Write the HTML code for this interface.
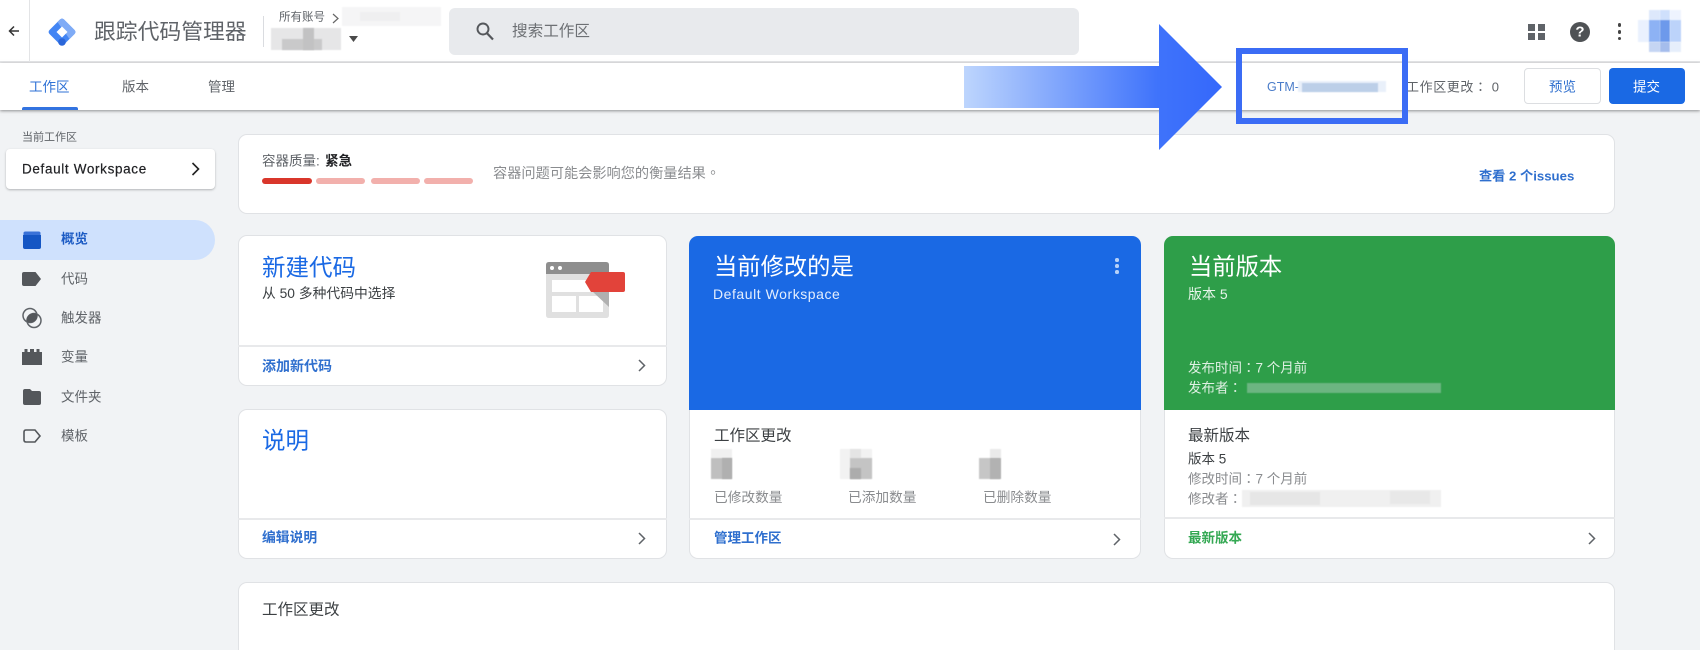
<!DOCTYPE html>
<html lang="zh-CN"><head><meta charset="utf-8"><title>跟踪代码管理器</title>
<style>
*{box-sizing:border-box}
html,body{margin:0;padding:0;width:1700px;height:650px;overflow:hidden;background:#f1f3f5}
#w{position:relative;width:1700px;height:650px;overflow:hidden;background:#f1f3f5;font-family:"Liberation Sans","Noto Sans CJK SC",sans-serif;color:#3c4043;filter:blur(.3px)}
.a{position:absolute}
.t{position:absolute;white-space:nowrap;line-height:1;transform:translateY(-50%);font-size:14px}
.tc{font-family:"Liberation Sans","Noto Sans CJK TC",sans-serif}
.card{position:absolute;background:#fff;border:1px solid #e0e2e5;border-radius:9px;overflow:hidden}
.line{position:absolute;height:2px;background:#e8e9eb}
.blue{color:#2f6fce}
.b{font-weight:700}
.g{color:#8a8c8f}
.px{position:absolute;filter:blur(.6px)}
svg{position:absolute;overflow:visible}
</style></head><body><div id="w">

<!-- header -->
<div class="a" style="left:0;top:0;width:1700px;height:62px;background:#fff"></div>
<div class="a" style="left:0;top:61px;width:1700px;height:2px;background:#e6e7e9"></div>
<div class="a" style="left:0;top:63px;width:1700px;height:47px;background:#fff;box-shadow:0 1px 3px rgba(60,60,60,.55)"></div>
<div class="a" style="left:29px;top:0;width:1px;height:62px;background:#e3e4e6"></div>
<svg style="left:7px;top:24px" width="14" height="14" viewBox="0 0 14 14"><path d="M12 7H2.500M7 2.500 2.500 7 7 11.500" fill="none" stroke="#333" stroke-width="1.500"/></svg>
<svg style="left:47px;top:17px" width="30" height="30" viewBox="0 0 30 30">
<path d="M13 2.500Q15 .8 17 2.500L27.500 13Q29.300 15 27.500 17L17 27.500Q15 29.200 13 27.500L2.500 17Q.7 15 2.500 13Z" fill="#4285f4"/>
<path d="M13 2.500Q15 .8 17 2.500L27.500 13Q29.300 15 27.500 17L22.500 22 10.500 5Z" fill="#7fabf6"/>
<circle cx="15" cy="25" r="3.800" fill="#2a66d9"/>
<path d="M15 9.500 20.500 15 15 20.500 9.500 15Z" fill="#fff"/>
</svg>
<span class="t" style="left:94px;top:32px;font-size:21.800px;color:#5f6368">跟踪代码管理器</span>
<div class="a" style="left:263px;top:16px;width:1px;height:31px;background:#dadce0"></div>
<span class="t" style="left:279px;top:18px;font-size:11.500px;color:#5f6368">所有账号</span>
<svg style="left:332px;top:13px" width="8" height="11" viewBox="0 0 8 11"><path d="M1 1 6 5.500 1 10" fill="none" stroke="#666" stroke-width="1.200"/></svg>
<div class="px" style="left:342px;top:7px;width:99px;height:19px;background:#f5f5f6"></div>
<div class="px" style="left:360px;top:12px;width:40px;height:9px;background:#efeff0"></div>
<div class="px" style="left:271px;top:28px;width:70px;height:22px;background:#e6e6e7"></div>
<div class="px" style="left:282px;top:39px;width:40px;height:11px;background:#c9c9ca"></div>
<div class="px" style="left:303px;top:28px;width:11px;height:22px;background:#c2c2c3"></div>
<svg style="left:349px;top:36px" width="9" height="6" viewBox="0 0 9 6"><path d="M0 0H9L4.500 6Z" fill="#4a4a4a"/></svg>

<div class="a" style="left:449px;top:8px;width:630px;height:47px;background:#e8eaed;border-radius:6px"></div>
<svg style="left:475px;top:21px" width="20" height="20" viewBox="0 0 20 20"><circle cx="8" cy="8" r="5.500" fill="none" stroke="#54575b" stroke-width="1.900"/><path d="M12 12.200 18 18.500" stroke="#54575b" stroke-width="2.200"/></svg>
<span class="t" style="left:512px;top:32px;font-size:15.600px;color:#6d7074">搜索工作区</span>

<!-- top right icons -->
<div class="a" style="left:1528px;top:24px;width:7px;height:7px;background:#5f6368"></div>
<div class="a" style="left:1538px;top:24px;width:7px;height:7px;background:#5f6368"></div>
<div class="a" style="left:1528px;top:33px;width:7px;height:7px;background:#5f6368"></div>
<div class="a" style="left:1538px;top:33px;width:7px;height:7px;background:#5f6368"></div>
<div class="a" style="left:1570px;top:22px;width:20px;height:20px;border-radius:50%;background:#4f5255"></div>
<span class="t b" style="left:1575px;top:32px;font-size:15px;color:#fff;width:10px;text-align:center">?</span>
<div class="a" style="left:1617.500px;top:23px;width:3.500px;height:3.500px;border-radius:50%;background:#444"></div>
<div class="a" style="left:1617.500px;top:30px;width:3.500px;height:3.500px;border-radius:50%;background:#444"></div>
<div class="a" style="left:1617.500px;top:36.500px;width:3.500px;height:3.500px;border-radius:50%;background:#444"></div>
<!-- avatar mosaic -->
<div class="px" style="left:1649px;top:10px;width:11px;height:10px;background:#dde8fb"></div>
<div class="px" style="left:1660px;top:10px;width:10px;height:10px;background:#cfe0fc"></div>
<div class="px" style="left:1670px;top:10px;width:11px;height:10px;background:#eef3fe"></div>
<div class="px" style="left:1638px;top:20px;width:11px;height:22px;background:#eaf1fe"></div>
<div class="px" style="left:1649px;top:20px;width:11px;height:22px;background:#8db2f4"></div>
<div class="px" style="left:1660px;top:20px;width:10px;height:22px;background:#6d99eb"></div>
<div class="px" style="left:1670px;top:20px;width:11px;height:22px;background:#bcd3fa"></div>
<div class="px" style="left:1649px;top:42px;width:11px;height:10px;background:#c5d5f3"></div>
<div class="px" style="left:1660px;top:42px;width:10px;height:10px;background:#a5bdec"></div>
<div class="px" style="left:1670px;top:42px;width:11px;height:10px;background:#e6eefb"></div>

<!-- tabs -->
<span class="t blue" style="left:29px;top:87px;font-size:13.500px;color:#2f72d6">工作区</span>
<div class="a" style="left:22px;top:107px;width:56px;height:3px;background:#3273e0;border-radius:2px 2px 0 0"></div>
<span class="t" style="left:122px;top:87px;font-size:13.500px;color:#5f6368">版本</span>
<span class="t" style="left:208px;top:87px;font-size:13.500px;color:#5f6368">管理</span>

<span class="t" style="left:1267px;top:87px;font-size:12.500px;color:#4a7cc9">GTM-</span>
<div class="px" style="left:1298px;top:81px;width:88px;height:11px;background:#e9f0fa"></div>
<div class="px" style="left:1302px;top:83px;width:76px;height:9px;background:#bccfe8"></div>
<span class="t tc" lang="zh-TW" style="left:1406px;top:87px;font-size:13px;letter-spacing:.6px;color:#5f6368">工作区更改： 0</span>
<div class="a" style="left:1524px;top:68px;width:77px;height:36px;background:#fff;border:1px solid #dcdee1;border-radius:4px"></div>
<span class="t" style="left:1549px;top:87px;font-size:13.500px;color:#2f6fce">预览</span>
<div class="a" style="left:1609px;top:68px;width:76px;height:36px;background:#1a69e4;border-radius:4px"></div>
<span class="t" style="left:1633px;top:87px;font-size:13.500px;color:#fff">提交</span>

<!-- sidebar -->
<span class="t" style="left:22px;top:138px;font-size:11px;color:#5f6368">当前工作区</span>
<div class="a" style="left:6px;top:149px;width:209px;height:40px;background:#fff;border-radius:4px;box-shadow:0 1px 2px rgba(60,64,67,.35)"></div>
<span class="t" style="left:22px;top:169px;font-size:13.500px;letter-spacing:.65px;color:#202124;-webkit-text-stroke:.2px #202124">Default Workspace</span>
<svg style="left:191px;top:162px" width="9" height="14" viewBox="0 0 9 14"><path d="M1.500 1 7.500 7 1.500 13" fill="none" stroke="#222" stroke-width="1.600"/></svg>

<div class="a" style="left:0;top:220px;width:215px;height:40px;background:#cfe1fd;border-radius:0 20px 20px 0"></div>
<svg style="left:22px;top:230px" width="20" height="20" viewBox="0 0 20 20"><path d="M2 2.500Q2 1 4 1H17Q19 1 19 2.500V5H2Z" fill="#3a72d8" transform="translate(-.5 .5)"/><path d="M1 5H19V17Q19 19 17 19H3Q1 19 1 17Z" fill="#1556c4"/></svg>
<svg style="left:22px;top:272px" width="20" height="14" viewBox="0 0 20 14"><path d="M2 0H13.500L19 7 13.500 14H2Q0 14 0 12V2Q0 0 2 0Z" fill="#54575b"/></svg>
<svg style="left:22px;top:307px" width="20" height="22" viewBox="0 0 20 22"><circle cx="8" cy="8.500" r="7" fill="none" stroke="#5f6368" stroke-width="1.500"/><circle cx="12" cy="13.500" r="7" fill="none" stroke="#5f6368" stroke-width="1.500"/><path d="M4.500 12.800A7 7 0 0 1 14.800 7.200 7 7 0 0 1 15.500 9 7 7 0 0 1 5.500 14.800Z" fill="#54575b"/></svg>
<svg style="left:22px;top:349px" width="20" height="16" viewBox="0 0 20 16"><path d="M0 16V3H2.500V0H5.500V3H8V0H12V3H14.500V0H17.500V3H20V16Z" fill="#54575b"/></svg>
<svg style="left:23px;top:389px" width="18" height="16" viewBox="0 0 18 16"><path d="M2 0H7L9 2H16Q18 2 18 4V14Q18 16 16 16H2Q0 16 0 14V2Q0 0 2 0Z" fill="#54575b"/></svg>
<svg style="left:23px;top:429px" width="18" height="14" viewBox="0 0 18 14"><path d="M3 1H12L17 7 12 13H3Q1 13 1 11V3Q1 1 3 1Z" fill="none" stroke="#54575b" stroke-width="1.600"/></svg>
<span class="t b" style="left:61px;top:239px;font-size:13.500px;color:#1c5bc4">概览</span>
<span class="t" style="left:61px;top:279px;font-size:13.500px;color:#5f6368">代码</span>
<span class="t" style="left:61px;top:318px;font-size:13.500px;color:#5f6368">触发器</span>
<span class="t" style="left:61px;top:357px;font-size:13.500px;color:#5f6368">变量</span>
<span class="t" style="left:61px;top:397px;font-size:13.500px;color:#5f6368">文件夹</span>
<span class="t" style="left:61px;top:436px;font-size:13.500px;color:#5f6368">模板</span>

<!-- quality card -->
<div class="card" style="left:237.500px;top:134px;width:1377.500px;height:80px"></div>
<span class="t" style="left:262px;top:161px;font-size:13.500px;color:#5f6368">容器质量:</span>
<span class="t b" style="left:325px;top:161px;font-size:13.500px;color:#202124">紧急</span>
<div class="a" style="left:262px;top:178px;width:50px;height:6px;border-radius:3px;background:#d9362b"></div>
<div class="a" style="left:316px;top:178px;width:49px;height:6px;border-radius:3px;background:#f2b0ac"></div>
<div class="a" style="left:371px;top:178px;width:49px;height:6px;border-radius:3px;background:#f2b0ac"></div>
<div class="a" style="left:424px;top:178px;width:49px;height:6px;border-radius:3px;background:#f2b0ac"></div>
<span class="t g tc" lang="zh-TW" style="left:493px;top:174px;font-size:14.200px">容器问题可能会影响您的衡量结果。</span>
<span class="t blue b" style="left:1479px;top:176px;font-size:13.200px">查看 2 个issues</span>

<!-- new tag -->
<div class="card" style="left:237.500px;top:235px;width:429.500px;height:151px"></div>
<div class="line" style="left:238px;top:345px;width:429px"></div>
<span class="t" style="left:262px;top:268px;font-size:23.500px;color:#1a69e4">新建代码</span>
<span class="t" style="left:262px;top:294px;font-size:13.800px;color:#3c4043">从 50 多种代码中选择</span>
<svg style="left:546px;top:262px" width="80" height="57" viewBox="0 0 80 57">
<path d="M3 0H60Q63 0 63 3V53Q63 56 60 56H3Q0 56 0 53V3Q0 0 3 0Z" fill="#e0e0e0"/>
<path d="M3 0H60Q63 0 63 3V12H0V3Q0 0 3 0Z" fill="#8e8e8e"/>
<circle cx="6" cy="6" r="2" fill="#fff"/><circle cx="14" cy="6" r="2" fill="#fff"/>
<rect x="6" y="18" width="52" height="12" fill="#fff"/>
<rect x="6" y="34" width="24" height="16" fill="#fff"/><rect x="33" y="34" width="24" height="16" fill="#fff"/>
<path d="M47 30H63V45Z" fill="#b0b0b0"/>
<path d="M45 10H77Q79 10 79 12V28Q79 30 77 30H45L39 20Z" fill="#e2433a"/>
</svg>
<span class="t b" style="left:262px;top:366px;font-size:14px;color:#2f6fce">添加新代码</span>
<svg style="left:638px;top:359px" width="8" height="13" viewBox="0 0 8 13"><path d="M1 1 6.500 6.500 1 12" fill="none" stroke="#5f6368" stroke-width="1.500"/></svg>

<!-- description -->
<div class="card" style="left:237.500px;top:409px;width:429.500px;height:150px"></div>
<div class="line" style="left:238px;top:518px;width:429px"></div>
<span class="t" style="left:262px;top:441px;font-size:23.500px;color:#1a69e4">说明</span>
<span class="t b" style="left:262px;top:538px;font-size:13.800px;color:#2f6fce">编辑说明</span>
<svg style="left:638px;top:532px" width="8" height="13" viewBox="0 0 8 13"><path d="M1 1 6.500 6.500 1 12" fill="none" stroke="#5f6368" stroke-width="1.500"/></svg>

<!-- bottom card -->
<div class="card" style="left:237.500px;top:582px;width:1377.500px;height:90px"></div>
<span class="t" style="left:262px;top:610px;font-size:15.500px;color:#3c4043">工作区更改</span>

<!-- blue card -->
<div class="card" style="left:689px;top:236px;width:452px;height:323px"></div>
<div class="a" style="left:689px;top:236px;width:452px;height:174px;background:#1a69e4;border-radius:9px 9px 0 0"></div>
<span class="t" style="left:714px;top:267px;font-size:23.300px;color:#fff">当前修改的是</span>
<span class="t" style="left:713px;top:294px;font-size:14px;letter-spacing:.55px;color:#e4eefd">Default Workspace</span>
<div class="a" style="left:1115px;top:258px;width:3.500px;height:3.500px;border-radius:50%;background:#b8d2f8"></div>
<div class="a" style="left:1115px;top:264px;width:3.500px;height:3.500px;border-radius:50%;background:#b8d2f8"></div>
<div class="a" style="left:1115px;top:270px;width:3.500px;height:3.500px;border-radius:50%;background:#b8d2f8"></div>
<span class="t" style="left:714px;top:436px;font-size:15.500px;color:#3c4043">工作区更改</span>
<div class="px" style="left:711px;top:449px;width:21px;height:9px;background:#f0f0f0"></div>
<div class="px" style="left:711px;top:458px;width:21px;height:21px;background:#bfbfbf"></div>
<div class="px" style="left:722px;top:458px;width:10px;height:21px;background:#b0b0b0"></div>
<div class="px" style="left:840px;top:449px;width:32px;height:30px;background:#f2f2f2"></div>
<div class="px" style="left:850px;top:449px;width:11px;height:9px;background:#e4e4e4"></div>
<div class="px" style="left:850px;top:458px;width:22px;height:21px;background:#c4c4c4"></div>
<div class="px" style="left:850px;top:468px;width:11px;height:11px;background:#acacac"></div>
<div class="px" style="left:979px;top:458px;width:21px;height:21px;background:#c6c6c6"></div>
<div class="px" style="left:990px;top:449px;width:11px;height:9px;background:#eaeaea"></div>
<div class="px" style="left:990px;top:458px;width:11px;height:21px;background:#b2b2b2"></div>
<span class="t g" style="left:714px;top:498px;font-size:13.700px">已修改数量</span>
<span class="t g" style="left:848px;top:498px;font-size:13.700px">已添加数量</span>
<span class="t g" style="left:983px;top:498px;font-size:13.700px">已删除数量</span>
<div class="line" style="left:689px;top:518px;width:452px"></div>
<span class="t b" style="left:714px;top:538px;font-size:13.500px;color:#2f6fce">管理工作区</span>
<svg style="left:1113px;top:533px" width="8" height="13" viewBox="0 0 8 13"><path d="M1 1 6.500 6.500 1 12" fill="none" stroke="#5f6368" stroke-width="1.500"/></svg>

<!-- green card -->
<div class="card" style="left:1164px;top:236px;width:451px;height:323px"></div>
<div class="a" style="left:1164px;top:236px;width:451px;height:174px;background:#2e9e49;border-radius:9px 9px 0 0"></div>
<span class="t" style="left:1189px;top:267px;font-size:23.300px;color:#fff">当前版本</span>
<span class="t" style="left:1188px;top:294px;font-size:14px;color:#e6f4e9">版本 5</span>
<span class="t tc" lang="zh-TW" style="left:1188px;top:368px;font-size:13.500px;color:#dff0e3">发布时间：7 个月前</span>
<span class="t tc" lang="zh-TW" style="left:1188px;top:388px;font-size:13.500px;color:#dff0e3">发布者：</span>
<div class="px" style="left:1247px;top:383px;width:194px;height:10px;background:#6cb581"></div>
<span class="t" style="left:1188px;top:436px;font-size:15.500px;color:#3c4043">最新版本</span>
<span class="t" style="left:1188px;top:459px;font-size:13.500px;color:#3c4043">版本 5</span>
<span class="t g tc" lang="zh-TW" style="left:1188px;top:479px;font-size:13.500px">修改时间：7 个月前</span>
<span class="t g tc" lang="zh-TW" style="left:1188px;top:499px;font-size:13.500px">修改者：</span>
<div class="px" style="left:1242px;top:490px;width:199px;height:17px;background:#f0f0f0"></div>
<div class="px" style="left:1250px;top:492px;width:70px;height:13px;background:#e6e6e6"></div>
<div class="px" style="left:1390px;top:491px;width:40px;height:13px;background:#e8e8e8"></div>
<div class="line" style="left:1164px;top:517px;width:451px"></div>
<span class="t b" style="left:1188px;top:538px;font-size:13.500px;color:#34a853">最新版本</span>
<svg style="left:1588px;top:532px" width="8" height="13" viewBox="0 0 8 13"><path d="M1 1 6.500 6.500 1 12" fill="none" stroke="#5f6368" stroke-width="1.500"/></svg>

<!-- annotation arrow -->
<svg style="left:964px;top:24px" width="258" height="126" viewBox="0 0 258 126">
<defs><linearGradient id="ag" x1="0" x2="1" y1="0" y2="0"><stop offset="0" stop-color="#bdd5fd"/><stop offset=".75" stop-color="#3f73fb"/><stop offset="1" stop-color="#3568fb"/></linearGradient></defs>
<path d="M0 42H195V0L258 63 195 126V84H0Z" fill="url(#ag)"/>
</svg>
<div class="a" style="left:1236px;top:48px;width:172px;height:76px;border:6px solid #3b6cf5"></div>
</div></body></html>
